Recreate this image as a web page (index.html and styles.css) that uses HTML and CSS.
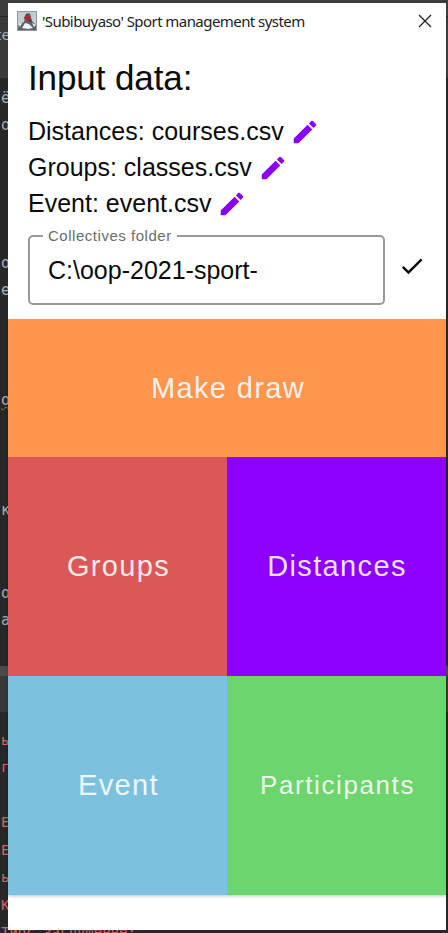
FILE: index.html
```html
<!DOCTYPE html>
<html lang="en">
<head>
<meta charset="utf-8">
<title>'Subibuyaso' Sport management system</title>
<link rel="stylesheet" href="styles.css">
</head>
<body>
<div class="desktop">
  <div class="editor" aria-hidden="true">
    <div class="band band-tabs"></div>
    <div class="band band-bar"></div>
    <div class="band band-divider"></div>
    <div class="band band-console"></div>
    <span class="code ui" style="top:24px;left:-4px">te</span>
    <span class="code" style="top:88px">ё</span>
    <span class="code" style="top:115px">о</span>
    <span class="code" style="top:253px">о</span>
    <span class="code" style="top:280px">е</span>
    <span class="code typo" style="top:390px">о</span>
    <span class="code" style="top:500px">к</span>
    <span class="code" style="top:583px">о</span>
    <span class="code" style="top:610px">а</span>
    <span class="code error" style="top:730px">ь</span>
    <span class="code error" style="top:757px">г</span>
    <span class="code error" style="top:812px">Е</span>
    <span class="code error" style="top:840px">Е</span>
    <span class="code error" style="top:867px">ь</span>
    <span class="code error" style="top:895px">К</span>
    <span class="code error" style="top:922px">Тиос заглушенне:</span>
  </div>
  <main class="window">
    <header class="titlebar">
      <svg class="app-icon" viewBox="0 0 20 20">
        <rect width="20" height="20" fill="#8f9aa3"/>
        <rect x="1" y="1" width="18" height="13" fill="#c3ccd3"/>
        <path d="M1 19l1-5 5-3 2-8 4-1 2 8 4 4v5z" fill="#59636b"/>
        <path d="M5 17l3-5 4 1 4 4-5 1zM2 13l3-1-2 4zM15 12l4 2-2 2z" fill="#f1f3f4"/>
        <path d="M7 7l3-5 5 9-4-1z" fill="#343b42"/>
        <circle cx="10.5" cy="7" r="3" fill="#a92b36"/>
      </svg>
      <h1 class="title">'Subibuyaso' Sport management system</h1>
      <svg class="close" viewBox="0 0 14 14"><path d="M1 1l12 12M13 1L1 13" stroke="#222" stroke-width="1.3" fill="none"/></svg>
    </header>
    <section class="inputs">
      <h2 class="heading">Input data:</h2>
      <div class="row"><span>Distances: courses.csv</span><svg class="edit" viewBox="0 0 24 24"><path d="M3 17.25V21h3.75L17.81 9.94l-3.75-3.75L3 17.25zM20.71 7.04a1 1 0 0 0 0-1.41l-2.34-2.34a1 1 0 0 0-1.41 0l-1.83 1.83 3.75 3.75 1.83-1.83z"/></svg></div>
      <div class="row"><span>Groups: classes.csv</span><svg class="edit" viewBox="0 0 24 24"><path d="M3 17.25V21h3.75L17.81 9.94l-3.75-3.75L3 17.25zM20.71 7.04a1 1 0 0 0 0-1.41l-2.34-2.34a1 1 0 0 0-1.41 0l-1.83 1.83 3.75 3.75 1.83-1.83z"/></svg></div>
      <div class="row"><span>Event: event.csv</span><svg class="edit" viewBox="0 0 24 24"><path d="M3 17.25V21h3.75L17.81 9.94l-3.75-3.75L3 17.25zM20.71 7.04a1 1 0 0 0 0-1.41l-2.34-2.34a1 1 0 0 0-1.41 0l-1.83 1.83 3.75 3.75 1.83-1.83z"/></svg></div>
      <div class="folder">
        <fieldset class="field">
          <legend>Collectives folder</legend>
          <div class="value">C:\oop-2021-sport-</div>
        </fieldset>
        <svg class="check" viewBox="0 0 24 24"><path d="M9 16.17L4.83 12l-1.42 1.41L9 19 21 7l-1.41-1.41z"/></svg>
      </div>
    </section>
    <nav class="tiles">
      <button class="tile draw">Make draw</button>
      <button class="tile groups">Groups</button>
      <button class="tile distances">Distances</button>
      <button class="tile event">Event</button>
      <button class="tile participants">Participants</button>
    </nav>
  </main>
</div>
</body>
</html>
```
FILE: styles.css
```css
* { box-sizing: border-box; }
body { margin: 0; font-family: "Liberation Sans", sans-serif; color: #0b0b0b; }

.desktop {
  position: relative;
  width: 448px;
  height: 933px;
  padding: 3px 2px 3px 8px;
  overflow: hidden;
  background: #272727;
}

/* Editor visible behind the window */
.editor { position: absolute; inset: 0; }
.band { position: absolute; left: 0; right: 0; }
.band-tabs { top: 0; height: 16px; background: #3b3d3e; }
.band-bar { top: 17px; height: 61px; background: #383b3c; }
.band-divider { top: 666px; height: 10px; background: #4a4a4b; }
.band-console { top: 676px; height: 36px; background: #38393a; }
.code {
  position: absolute;
  left: 1px;
  font: 15px/20px "DejaVu Sans Mono", monospace;
  color: #a3afbd;
  white-space: pre;
}
.ui { font: 15px/20px "Noto Sans", sans-serif; }
.typo { text-decoration: underline wavy #6a8759 1px; }
.error { color: #d9636a; font-size: 14px; }

.window {
  position: relative;
  display: flex;
  flex-direction: column;
  height: 927px;
  background: #fff;
}

.titlebar {
  display: flex;
  align-items: center;
  height: 37px;
  padding: 0 14px 0 9px;
}
.app-icon { width: 20px; height: 20px; margin-bottom: 1px; }
.title {
  flex: 1;
  margin: 0 0 2px 5px;
  font: 400 15px/20px "Noto Sans", sans-serif;
  letter-spacing: -0.56px;
  white-space: nowrap;
  color: #1c1c1c;
}
.close { width: 14px; height: 14px; margin-bottom: 1px; }

.inputs { height: 279px; padding: 18px 20px 0; }
.heading { margin: 0 0 15px; font-size: 35px; font-weight: 400; line-height: 40px; letter-spacing: -0.1px; }
.row {
  display: flex;
  align-items: center;
  gap: 6px;
  height: 36px;
  font-size: 25px;
  line-height: 36px;
}
.edit { width: 30px; height: 30px; margin-top: 1px; fill: #8a00f5; }

.folder { display: flex; align-items: flex-start; gap: 12px; margin-top: 6px; }
.field {
  width: 358px;
  height: 78px;
  min-width: 0;
  margin: 0;
  padding: 0 18px 0 13px;
  border: 2px solid #999;
  border-radius: 5px;
}
.field legend {
  padding: 0 5px;
  font-size: 15px;
  line-height: 18px;
  letter-spacing: 0.53px;
  color: #6c6c6c;
}
.value { padding: 10px 0 0 5px; font-size: 25px; line-height: 30px; }
.check { width: 28px; height: 28px; margin: 25px 0 0 1px; fill: #0b0b0b; }

.tiles {
  display: grid;
  grid-template-columns: 1fr 1fr;
  grid-template-rows: 138px 219px 219px;
  box-shadow: 0 1px 3px rgba(0, 0, 0, 0.25);
}
.tile {
  border: 0;
  padding: 0 0 1px 2px;
  font: 29px/34px "Liberation Sans", sans-serif;
  letter-spacing: 1.35px;
  color: rgba(255, 255, 255, 0.9);
}
.draw { grid-column: 1 / -1; padding-bottom: 0; background: #ff964f; }
.groups { background: #db5856; }
.distances { padding-left: 1px; background: #8b00ff; }
.event { background: #7cc2df; }
.participants { background: #6dd56d; font-size: 26px; letter-spacing: 1.6px; }
```
